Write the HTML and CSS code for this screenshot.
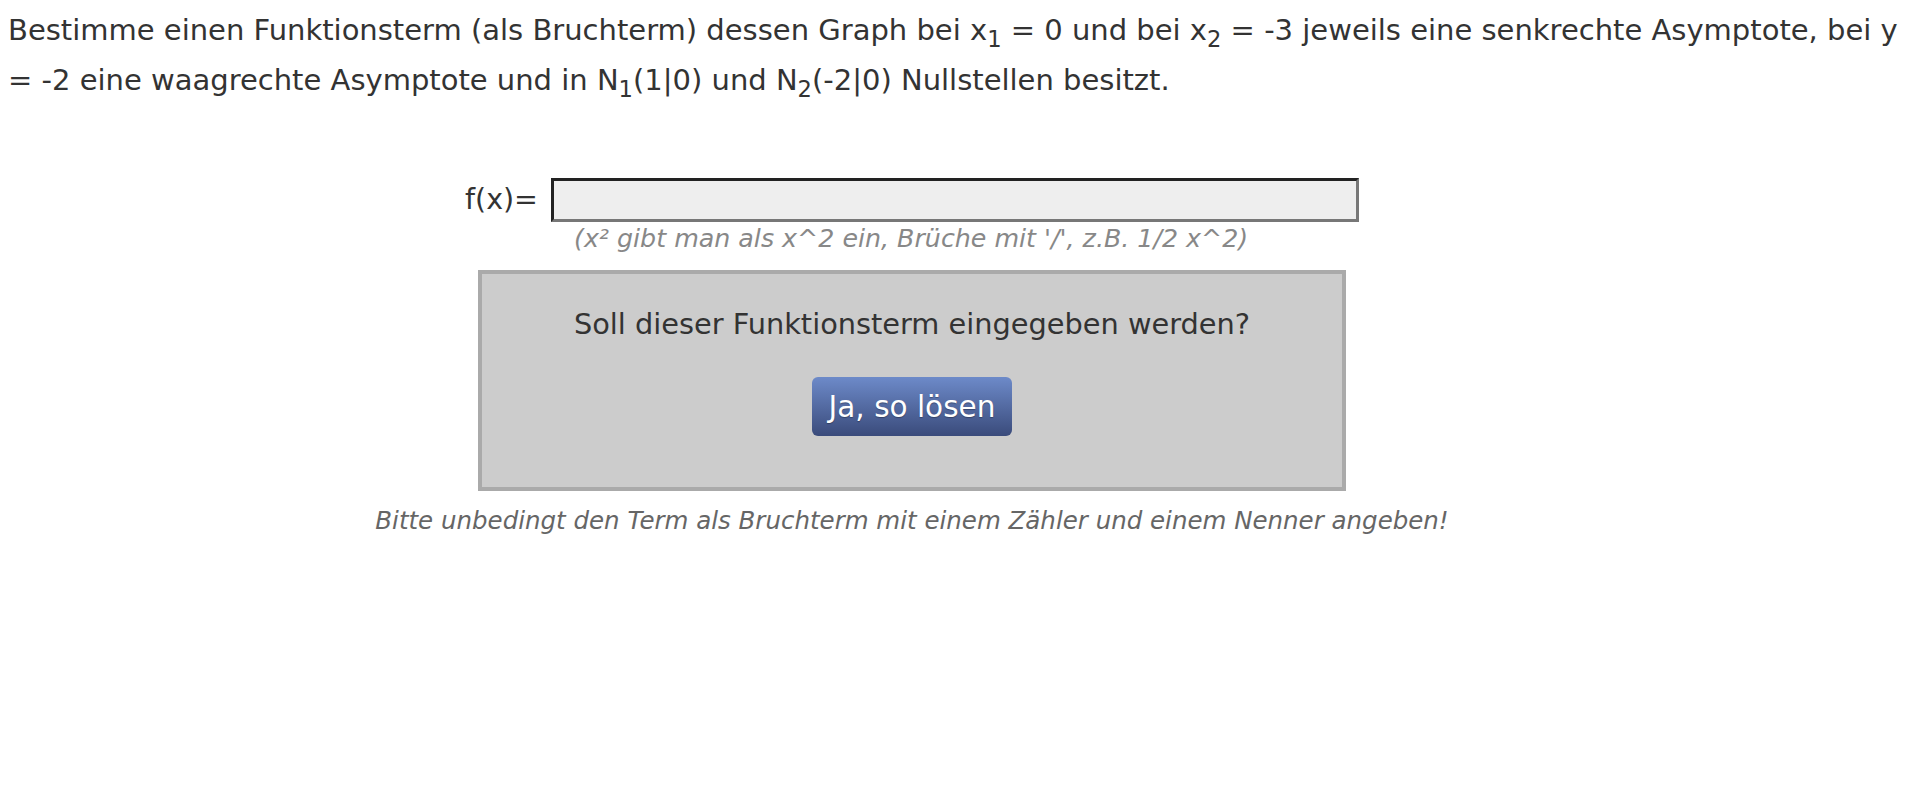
FILE: index.html
```html
<!DOCTYPE html>
<html lang="de">
<head>
<meta charset="utf-8">
<title>Funktionsterm bestimmen</title>
<link rel="stylesheet" href="styles.css">
</head>
<body>
<p class="task">Bestimme einen Funktionsterm (als Bruchterm) dessen Graph bei x<sub>1</sub> = 0 und bei x<sub>2</sub> = -3 jeweils eine senkrechte Asymptote, bei y = -2 eine waagrechte Asymptote und in N<sub>1</sub>(1|0) und N<sub>2</sub>(-2|0) Nullstellen besitzt.</p>
<div class="form">
  <div class="term-row">
    <label class="term-label" for="term">f(x)=</label>
    <div class="term-col">
      <input class="term-input" id="term" type="text">
      <div class="hint">(x² gibt man als x^2 ein, Brüche mit '/', z.B. 1/2 x^2)</div>
    </div>
  </div>
  <div class="confirm">
    <div class="confirm-text">Soll dieser Funktionsterm eingegeben werden?</div>
    <button class="solve" type="button">Ja, so lösen</button>
  </div>
  <div class="note">Bitte unbedingt den Term als Bruchterm mit einem Zähler und einem Nenner angeben!</div>
</div>
</body>
</html>
```
FILE: styles.css
```css
html, body {
  background: #fff;
}
body {
  margin: 8px;
  font-family: "DejaVu Sans", Verdana, sans-serif;
  color: #333;
}
.task {
  margin: -3px 0 0;
  font-size: 29px;
  line-height: 50px;
}
.task sub {
  font-size: 0.78em;
  line-height: 0;
  vertical-align: -0.3em;
}
.form {
  width: 1808px;
  display: flex;
  flex-direction: column;
  align-items: center;
  margin-top: 73px;
}
.term-row {
  display: flex;
  align-items: flex-start;
  gap: 13px;
}
.term-label {
  font-size: 28.5px;
  line-height: 44px;
  color: #333;
}
.term-col {
  display: flex;
  flex-direction: column;
}
.term-input {
  box-sizing: border-box;
  width: 808px;
  height: 44px;
  margin: 0;
  padding: 0 6px;
  background: #eee;
  border-style: solid;
  border-width: 3px;
  border-color: #222 #777 #777 #222;
  font-family: inherit;
  font-size: 24px;
  outline: none;
}
.hint {
  padding-left: 23px;
  font-size: 25.3px;
  line-height: 34px;
  font-style: italic;
  color: #888;
}
.confirm {
  box-sizing: border-box;
  width: 868px;
  height: 221px;
  margin-top: 14px;
  padding-top: 30px;
  background: #ccc;
  border: 4px solid #aaa;
  display: flex;
  flex-direction: column;
  align-items: center;
}
.confirm-text {
  font-size: 28.8px;
  line-height: 40px;
  color: #333;
}
.solve {
  margin-top: 33px;
  height: 59px;
  padding: 0 17px;
  border: none;
  border-radius: 6px;
  background: linear-gradient(#6d8ac9, #3a4b7b);
  color: #fff;
  font-family: inherit;
  font-size: 29.5px;
  text-shadow: 0 1px 1px rgba(0, 0, 0, 0.3);
}
.note {
  margin-top: 12px;
  font-size: 24.5px;
  line-height: 36px;
  font-style: italic;
  color: #666;
}
```
